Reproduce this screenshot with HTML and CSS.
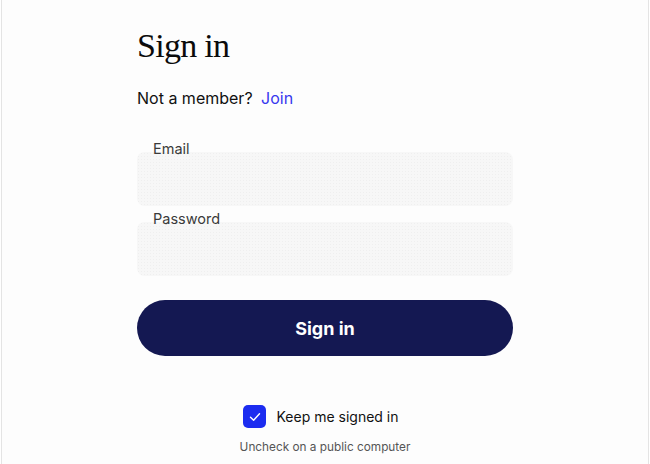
FILE: index.html
```html
<!DOCTYPE html>
<html lang="en">
<head>
<meta charset="utf-8">
<title>Sign in</title>
<link rel="stylesheet" href="styles.css">
</head>
<body>
<div class="frame">
  <main class="panel">
    <h1 class="title">Sign in</h1>
    <p class="member">Not a member? <a class="join" href="#">Join</a></p>
    <form class="form">
      <div class="field">
        <label class="label" for="email">Email</label>
        <input class="input" id="email" type="email">
      </div>
      <div class="field">
        <label class="label" for="pw">Password</label>
        <input class="input" id="pw" type="password">
      </div>
      <button class="submit" type="button">Sign in</button>
      <div class="keep">
        <span class="check">
          <svg width="12" height="10" viewBox="0 0 12 10"><polyline points="1.5,5.2 4.6,8.2 10.5,1.8" fill="none" stroke="#fff" stroke-width="1.4" stroke-linecap="round" stroke-linejoin="round"/></svg>
        </span>
        <span class="keep-text">Keep me signed in</span>
      </div>
      <p class="hint">Uncheck on a public computer</p>
    </form>
  </main>
</div>
</body>
</html>
```

FILE: styles.css
```css
html, body {
  margin: 0;
  padding: 0;
  background: #fff;
}
body {
  font-family: Inter, "Noto Sans", sans-serif;
  color: #111;
}
.frame {
  margin: 0 1px;
  min-height: 464px;
  border-left: 1px solid #e4e4e4;
  border-right: 1px solid #e4e4e4;
  background: #fdfdfd;
  box-sizing: border-box;
}
.panel {
  width: 376px;
  margin: 0 auto;
  padding-top: 26px;
}
.title {
  margin: 0;
  font-family: "Liberation Serif", "DejaVu Serif", serif;
  font-weight: 400;
  font-size: 34px;
  line-height: 40px;
  letter-spacing: -0.7px;
  color: #0b0b0b;
}
.member {
  margin: 20px 0 0;
  font-size: 16px;
  line-height: 24px;
  color: #111;
}
.join {
  color: #3838ef;
  text-decoration: none;
  margin-left: 4px;
}
.form {
  margin-top: 32px;
  display: flex;
  flex-direction: column;
}
.field {
  display: flex;
  flex-direction: column;
  margin-bottom: 6px;
}
.label {
  display: block;
  padding-left: 16px;
  font-size: 14.5px;
  line-height: 14px;
  color: #3a3a3a;
  position: relative;
  z-index: 1;
}
.input {
  margin-top: -4px;
  height: 54px;
  border: 0;
  border-radius: 8px;
  background-color: #f7f7f7;
  background-image: radial-gradient(#efefef 0.6px, transparent 0.7px);
  background-size: 3px 3px;
  box-sizing: border-box;
  outline: none;
}
.submit {
  margin-top: 18px;
  height: 56px;
  border: 0;
  border-radius: 28px;
  background: #141852;
  color: #fff;
  font-family: Inter, "Noto Sans", sans-serif;
  font-weight: 700;
  font-size: 18px;
  cursor: pointer;
}
.keep {
  margin-top: 49px;
  display: flex;
  align-items: center;
  justify-content: center;
  gap: 10px;
  padding-right: 8px;
}
.check {
  width: 23px;
  height: 23px;
  border-radius: 5px;
  background: #1c2cf0;
  display: flex;
  align-items: center;
  justify-content: center;
}
.keep-text {
  font-size: 14px;
  line-height: 20px;
  color: #111;
}
.hint {
  margin: 11px 0 0;
  text-align: center;
  font-size: 11.8px;
  line-height: 16px;
  color: #555;
}
```
